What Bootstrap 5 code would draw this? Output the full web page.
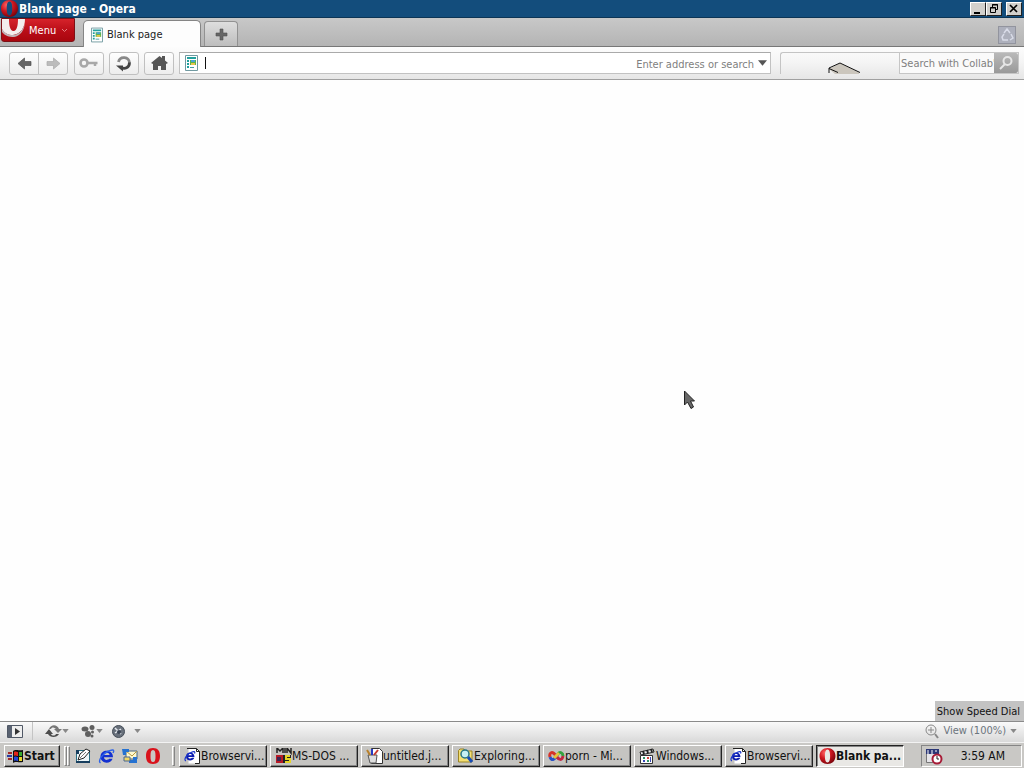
<!DOCTYPE html>
<html lang="en">
<head>
<meta charset="utf-8">
<meta name="viewport" content="width=device-width, initial-scale=1">
<title>Blank page - Opera</title>
<link href="https://cdn.jsdelivr.net/npm/bootstrap@5.3.0/dist/css/bootstrap.min.css" rel="stylesheet">
<style>
body{font:11px/14px "DejaVu Sans Condensed","DejaVu Sans",sans-serif;color:#222;background:#fefefe}
button,input{font:inherit;color:inherit;border-radius:0}
svg{display:block;flex:none}
.titlebar{height:18px;background:#134d7c;color:#fff;border-bottom:1px solid #0c3555;padding:0 2px 0 1px}
.titlebar h1{font-size:12px;line-height:17px;font-weight:700;padding:2px 0 0 1px}
.win-btn{width:16px;height:14px;padding:0;background:#d2d0cc;border:1px solid;border-color:#fff #222 #222 #fff}
.tabstrip{height:29px;background:linear-gradient(#c8c8c8,#b4b4b4);border-bottom:1px solid #777}
.menu-btn{width:74px;height:24px;margin-left:1px;padding:0 6px 0 0;color:#fff;background:linear-gradient(#d6232b,#b90d17 55%,#a9060e);border:1px solid #7d1117;border-radius:0 0 3px 3px;overflow:hidden}
.menu-btn span{padding-top:2px}
.page-tab{width:118px;height:27px;margin:0 3px -1px 8px;padding:1px 7px 0;background:#fdfdfd;border:1px solid #858585;border-bottom:0;border-radius:5px 5px 0 0;color:#222}
.new-tab{width:34px;height:25px;padding:0;background:linear-gradient(#dedede,#bdbdbd);border:1px solid #929292;border-bottom:0;border-radius:4px 4px 0 0}
.trash{width:18px;height:18px;padding:0;background:#adb0bc;border:1px solid #92949e;margin:0 8px 2px 0}
.toolbar{height:33px;background:linear-gradient(#fcfcfc,#f4f4f4 50%,#e6e6e6);border-bottom:1px solid #a0a0a0;padding:0 5px 0 9px}
.tools{gap:5px}
.tool{width:30px;height:23px;padding:0;background:linear-gradient(#fefefe,#ededed);border:1px solid #c0c0c0;border-radius:3px}
.tool-l{border-radius:3px 0 0 3px}
.tool-r{border-radius:0 3px 3px 0;margin-left:-1px}
.history{padding-right:1px}
.address{height:22px;background:#fff;border:1px solid #c2c2c2;border-top-color:#aaa;padding:0 3px 0 5px;margin-right:9px}
.plain{border:0;outline:0;background:transparent;padding:0;min-width:0}
.plain::placeholder{color:#808080;opacity:1}
.address input,.finder input{padding-top:2px}
.caret{width:1px;height:12px;background:#111;margin-left:3px}
.throbber{width:119px;height:22px;border:1px solid #c4c4c4;border-right:0;border-bottom:0;border-radius:3px 0 0 0;padding-left:46px}
.finder{width:120px;height:22px;border:1px solid #c6c6c6;background:#fafafa;padding-left:1px}
.find-btn{width:24px;height:20px;padding:0;border:0;background:linear-gradient(#b9b9b9,#999);border-radius:0 2px 2px 0}
.pointer{left:66.8%;top:48.4%}
.tip{right:0;bottom:0;height:20px;padding:1px 4px 0 2px;line-height:20px;background:#c3c3c3;color:#111}
.status{height:21px;border-top:1px solid #8b8b8b;background:linear-gradient(#fafafa,#d9d9d9);padding:0 7px 2px}
.status button{height:18px}
.divider{width:1px;height:18px;background:#c4c4c4;margin:0 12px 0 9px}
.taskbar{height:26px;background:#c9c8c5;border-top:1px solid #f2f2f2;padding:0 2px 0 4px;color:#111}
.task{height:22px;padding:0 2px;background:#c5c4c1;border:1px solid;border-color:#fff #222 #222 #fff;box-shadow:inset -1px -1px #858585;text-align:left}
.tasks{gap:3px;margin-left:4px}
.tasks .task{flex:1 1 0;min-width:0;max-width:88px;padding-left:4px;font-size:12px}
.task.start{width:56px;font-size:12px;font-weight:700}
.tasks .task.active{background:#e9e8e5;border-color:#222 #fff #fff #222;box-shadow:inset 1px 1px #858585;font-weight:700;padding-left:2px}
.grip{width:3px;height:20px;border:1px solid;border-color:#fff #858585 #858585 #fff}
.quick{gap:7px;padding:0 11px 0 5px}
.tray{width:101px;height:22px;border:1px solid;border-color:#858585 #fff #fff #858585;padding:0 16px 0 3px;font-size:12px}
</style>
</head>
<body class="d-flex flex-column min-vh-100">
<svg width="0" height="0" class="position-absolute" aria-hidden="true">
<defs>
<radialGradient id="red" cx=".35" cy=".3" r=".8"><stop offset="0" stop-color="#f66"/><stop offset=".45" stop-color="#cf1720"/><stop offset="1" stop-color="#6e0008"/></radialGradient>
<symbol id="opera" viewBox="0 0 16 16"><path fill="url(#red)" fill-rule="evenodd" d="M8 0C3.500 0 0 3 0 8s3.500 8 8 8 8-3 8-8-3.500-8-8-8zm0 1.500c2 0 2.600 3 2.600 6.500S10 14.500 8 14.500 5.400 11.500 5.400 8 6 1.500 8 1.500z"/></symbol>
<symbol id="page" viewBox="0 0 13 16"><path fill="#fff" stroke="#7099a0" d="M.5.5h12v15H.5z"/><path fill="#21a09d" d="M2 2h9v2H2zM2 5h2v2H2zm0 3h2v2H2zm0 3h2v2H2z"/><path fill="#5bb54a" d="M5 5h6v5H5z"/><path fill="#e9c54c" d="M6 8h4v2H6z"/><path fill="#49a3d8" d="M6 5h4v2H6z"/><path stroke="#479aa0" d="M5 12.500h4"/></symbol>
<symbol id="ie" viewBox="0 0 16 16"><path d="M14.500 9.200H5.500c.2 3.300 4 3.300 5 1.500h3.600C12 16.500 2 16 2 8.500 2 1 14.500.5 14.500 9.200zM5.500 7h5.600c-.4-3-5-3-5.600 0z" fill="#1330d0"/><path d="M2 15c-3-2 2-9 7-11.500C14 1 16.500 1.500 14.500 5" fill="none" stroke="#2d63e8" stroke-width="1.400"/></symbol>
<symbol id="iedoc" viewBox="0 0 17 16"><path d="M4.500.5h8l3 3v12h-11z" fill="#fff"/><path d="M3 .5h9.500l3 3v12H11M12.500.5v3h3" fill="none" stroke="#222"/><path d="M10.500 9H4.200c.2 2 3 2 3.800.8h2.300C9 13.500 2 13.500 2 8.500c0-5.500 8.500-5 8.500.5zM4.300 7.300H8c-.5-1.600-3.300-1.600-3.700 0z" fill="#0b1bb0"/><path d="M2 13C-1 12 3 6 7 4.500c3-1.500 4.500-1 3.500 1" fill="none" stroke="#1a36cc" stroke-width="1.200"/></symbol>
<symbol id="drop" viewBox="0 0 8 5"><path d="M0 0h8L4 5z" fill="currentColor"/></symbol>
</defs></svg>

<header>
<div class="titlebar d-flex align-items-center">
<svg width="17" height="17"><use href="#opera"/></svg>
<h1 class="m-0 flex-grow-1">Blank page - Opera</h1>
<button class="win-btn" aria-label="Minimize"><svg width="14" height="12"><path d="M3 9h6v2H3z"/></svg></button>
<button class="win-btn me-1" aria-label="Restore"><svg width="14" height="12" fill="none" stroke="#000"><path d="M5.500 4V1.500h5v5H9M5 2h6M3.500 4.500h5v5h-5zM3 5h6"/></svg></button>
<button class="win-btn" aria-label="Close"><svg width="14" height="12"><path d="m3 2 7 7m0-7L3 9" stroke="#000" stroke-width="1.700"/></svg></button>
</div>
<div class="tabstrip d-flex align-items-end">
<button class="menu-btn d-flex align-items-center align-self-start"><svg width="27" height="22" viewBox="0 0 27 22"><path fill="#f3eeee" fill-rule="evenodd" d="M0 0h23c0 8-4 15-12 16C6 16 2 14 0 10zM7 0c0 6 1 12 4.500 12S16 6 16 0z"/><path fill="#c0b4b8" d="M0 10c3 4 6 6 11 6 6 0 10-5 12-12-1 8-5 13-11 14-5 0-9-1-12-5z"/></svg><span class="flex-grow-1 text-start">Menu</span><svg width="7" height="5"><path d="m1 1 2.500 2.500L6 1" fill="none" stroke="#e58084"/></svg></button>
<button class="page-tab d-flex align-items-center gap-1"><svg width="12" height="16"><use href="#page"/></svg>Blank page</button>
<button class="new-tab d-flex align-items-center justify-content-center" aria-label="New tab"><svg width="13" height="13"><path d="M5 1h3v4h4v3H8v4H5V8H1V5h4z" fill="#666" stroke="#505050" stroke-width=".6"/></svg></button>
<button class="trash ms-auto" aria-label="Closed tabs"><svg width="16" height="16" fill="none" stroke="#d9dce8" stroke-width="1.500"><path d="m5 6 3-4 3 4M12 7l2 4-3 2M9 13H4l-1-3 2-3"/></svg></button>
</div>
<div class="toolbar d-flex align-items-center">
<div class="tools d-flex align-items-center flex-grow-1">
<div class="history d-flex">
<button class="tool tool-l d-flex align-items-center justify-content-center" aria-label="Back"><svg width="15" height="13"><path d="M1 6.500 7.500 1v3.500H14v4H7.500V12z" fill="#666" stroke="#505050" stroke-width=".7"/></svg></button>
<button class="tool tool-r d-flex align-items-center justify-content-center" aria-label="Forward"><svg width="15" height="13"><path d="M14 6.500 7.500 1v3.500H1v4h6.500V12z" fill="#bcbcbc" stroke="#aaa" stroke-width=".7"/></svg></button>
</div>
<button class="tool d-flex align-items-center justify-content-center" aria-label="Wand"><svg width="20" height="12" fill="none" stroke="#a8a8a8"><circle cx="5" cy="6" r="3.500" stroke-width="2.600"/><path d="M9 6h9.500M16 6v3" stroke-width="2.500"/></svg></button>
<button class="tool d-flex align-items-center justify-content-center" aria-label="Reload"><svg width="18" height="17" fill="none" stroke-width="2.800"><path d="M3.500 7C5 .500 14.500 1.500 14.500 8" stroke="#888"/><path d="M14.500 7.500c0 5.500-5 7-8.500 5" stroke="#444"/><path d="M1 10.500h7v6z" fill="#444"/></svg></button>
<button class="tool d-flex align-items-center justify-content-center" aria-label="Home"><svg width="17" height="16"><path d="m0 8 8.500-7L11 3V1h3v4.500L17 8l-2 1v6h-5v-4H7v4H2V9z" fill="#555"/></svg></button>
<div class="address d-flex align-items-center flex-grow-1 gap-1">
<svg width="13" height="16"><use href="#page"/></svg>
<span class="caret"></span>
<input class="plain h-100 flex-grow-1 text-end" aria-label="Address" placeholder="Enter address or search">
<button class="plain d-flex" aria-label="Address history"><svg width="9" height="6" color="#555"><use href="#drop"/></svg></button>
</div></div>
<div class="throbber"><svg width="36" height="21"><path d="m2 16 11-6 19 9.500V21H8z" fill="#cbc6bd"/><path d="M2 20v-5l11-5 20 9.500M2 15.500l9 4" fill="none" stroke="#111"/></svg></div>
<div class="finder d-flex"><input class="plain flex-grow-1 w-100" aria-label="Search" placeholder="Search with Collab'"><button class="find-btn d-flex align-items-center justify-content-center flex-shrink-0" aria-label="Search"><svg width="16" height="16" fill="none" stroke="#e6e6e6" stroke-width="2"><circle cx="9.500" cy="6" r="4"/><path d="m7 9-5 5"/></svg></button></div>
</div>
</header>

<main class="flex-grow-1 position-relative">
<svg class="pointer position-absolute" width="12" height="20" viewBox="0 0 12 20" aria-hidden="true"><path d="M.5 1v14l3-3 3.500 6.500 2.500-1.500-3-6h4z" fill="#686868" stroke="#222"/></svg>
<div class="tip position-absolute" role="tooltip">Show Speed Dial</div>
</main>

<footer>
<div class="status d-flex align-items-center">
<button class="plain" aria-label="Panels"><svg width="16" height="18"><path d="M.5 3.500h15v12H.5z" fill="#eee" stroke="#505866"/><path d="M1 4h4v11H1z" fill="#596271"/><path d="m8 6 5 3.500L8 13z" fill="#333"/></svg></button>
<span class="divider"></span>
<div class="d-flex gap-2">
<button class="plain d-flex align-items-center" aria-label="Synchronize"><svg width="17" height="14"><path d="M4 5c2-5 8-5 10 0h3l-4 4-4-4h2C9 3 7 3 6 5z" fill="#777"/><path d="M14 10c-2 4-9 4-11 0H0l4-5 4 5H6c1 2 4 2 5 0z" fill="#4d4d4d"/></svg><svg width="7" height="4" color="#888"><use href="#drop"/></svg></button>
<button class="plain d-flex align-items-center ms-1" aria-label="Unite"><svg width="15" height="15" fill="#606060"><ellipse cx="4" cy="5" rx="3.500" ry="2.500"/><circle cx="11" cy="3.500" r="2.500"/><circle cx="7" cy="10" r="3"/><circle cx="11.500" cy="8" r="1.500"/><circle cx="11" cy="12" r="1.500"/></svg><svg width="7" height="4" color="#888"><use href="#drop"/></svg></button>
<button class="plain d-flex align-items-center gap-2" aria-label="Turbo"><svg width="15" height="15"><circle cx="7.500" cy="7.500" r="6" fill="#68707b" stroke="#444c57"/><path d="m4 4 6 6m-6-1 6-4" stroke="#e3e7ed" stroke-width="1.500"/><circle cx="8" cy="8" r="2" fill="#394352"/></svg><svg width="7" height="4" color="#888"><use href="#drop"/></svg></button>
</div>
<button class="plain d-flex align-items-center gap-1 ms-auto text-secondary"><svg width="14" height="15" fill="none" stroke="#888"><circle cx="6" cy="6" r="5"/><path d="M3 6h6M6 3v6"/><path d="m10 10 3 4" stroke-width="2"/></svg>View (100%)<svg width="7" height="4" color="#888"><use href="#drop"/></svg></button>
</div>
<nav class="taskbar d-flex align-items-center" aria-label="Taskbar">
<button class="task start d-flex align-items-center"><svg width="17" height="16"><path d="M6 3c3-2 4 0 10-1v12c-6 1-7-1-10 1z" fill="#111"/><path d="M7 4c2-1 2 0 4 0v4C9 8 9 7 7 8z" fill="#e5241b"/><path d="M12 4h3v4h-3z" fill="#35a82f"/><path d="M7 9c2-1 2 0 4 0v4c-2 0-2-1-4 0z" fill="#2344d8"/><path d="M12 9h3v4h-3z" fill="#e9d62c"/><path d="M1 4h4v2H1zm0 6h4v2H1z" fill="#a52825"/><path d="M0 7h5v2H0z" fill="#2a3ca5"/></svg>Start</button>
<span class="grip ms-1"></span><span class="grip"></span>
<div class="quick d-flex">
<button class="plain" aria-label="Show desktop"><svg width="16" height="16"><path d="M1.500 2.500h13v12h-13z" fill="#edf6f9" stroke="#276e83"/><path d="M1 13h14v2H1zM1 2h3v4H1z" fill="#173e5e"/><path d="m3 12 2-6 6-5 4 2-6 7z" fill="#fff" stroke="#222"/><path d="m5 10 6-6" stroke="#777"/></svg></button>
<button class="plain" aria-label="Internet Explorer"><svg width="17" height="16"><use href="#ie"/></svg></button>
<button class="plain" aria-label="Outlook Express"><svg width="16" height="16"><path d="M4 3h11v8H4z" fill="#fff8cf" stroke="#46637f"/><path d="m4 3 6 5 5-5" fill="none" stroke="#b6993d"/><path d="M0 1h7v3H4v3H1zm15 8v6H7v-3h4V9z" fill="#2672d1"/><path d="M2 9h6v4H2z" fill="#f2d864" stroke="#486791"/></svg></button>
<button class="plain" aria-label="Opera"><svg width="16" height="16"><path d="M8 0C3 0 1 3 1 8s2 8 7 8 7-3 7-8-2-8-7-8zm0 2c2 0 2.500 2 2.500 6S10 14 8 14s-2.500-2-2.500-6S6 2 8 2z" fill="#d9131c" fill-rule="evenodd"/></svg></button>
</div>
<span class="grip"></span>
<div class="tasks d-flex flex-grow-1">
<button class="task d-flex align-items-center"><svg width="17" height="16"><use href="#iedoc"/></svg><span class="text-nowrap">Browservi...</span></button>
<button class="task d-flex align-items-center"><svg width="17" height="16"><path d="M1 7h7v8H1z" fill="#b81925"/><path d="M8 7h8v8H8z" fill="#222"/><path d="M2 5V0l3 3 3-3v5M10 0v5M12 5V0l4 5V0" fill="none" stroke="#222" stroke-width="1.500"/><path d="M2 9h4v4H2z" fill="#3d2452"/><path d="M15 8h-4v3h4v3h-5" fill="none" stroke="#e6d426" stroke-width="2"/></svg><span class="text-nowrap">MS-DOS ...</span></button>
<button class="task d-flex align-items-center"><svg width="17" height="16"><path d="M5.500.5h8l3 3v12h-11z" fill="#fff" stroke="#333"/><path d="M2 7h9l-1 8H4z" fill="#dedede" stroke="#555"/><path d="m4 7-3-5" stroke="#b9802a" stroke-width="2"/><path d="M6 7V1" stroke="#263ac3" stroke-width="2"/><path d="m8 7 4-5" stroke="#c7392c" stroke-width="2"/></svg><span class="text-nowrap">untitled.j...</span></button>
<button class="task d-flex align-items-center"><svg width="17" height="16"><path d="M1.500 2.500 3 1h4l1 2h7v11H1.500z" fill="#f4df72" stroke="#9b8424"/><circle cx="8" cy="6" r="4" fill="#c6f0f3" stroke="#287585" stroke-width="1.500"/><path d="m11 9 4 5" stroke="#164bb7" stroke-width="3"/></svg><span class="text-nowrap">Exploring...</span></button>
<button class="task d-flex align-items-center"><svg width="17" height="16" fill="none" stroke-width="3"><path d="M8 8C4 2 1 5 2 9" stroke="#d73228"/><path d="M2 9c2 5 5 2 8-3" stroke="#2851c6"/><path d="M10 6c2-3 5-1 5 2" stroke="#33a340"/><path d="M15 8c-1 5-4 4-7 0" stroke="#c22742"/><path d="m6 10 5-5" stroke="#e5c33a"/></svg><span class="text-nowrap">porn - Mi...</span></button>
<button class="task d-flex align-items-center"><svg width="17" height="16"><path d="M1.500 7.500h12v8h-12z" fill="#fff" stroke="#333"/><path d="m1 4 13-3 1 3-13 3z" fill="#eee" stroke="#222"/><path d="m4 3 1 3m3-4 1 3m3-4 1 3" stroke="#222" stroke-width="2"/><path d="M4 9h2v2H4zm4 3h2v2H8z" fill="#31956a"/><path d="M8 9h2v2H8z" fill="#d3433d"/><path d="M4 12h2v2H4zm7-3h1v5h-1z" fill="#3948b7"/></svg><span class="text-nowrap">Windows...</span></button>
<button class="task d-flex align-items-center"><svg width="17" height="16"><use href="#iedoc"/></svg><span class="text-nowrap">Browservi...</span></button>
<button class="task active d-flex align-items-center"><svg width="17" height="16"><use href="#opera"/></svg><span class="text-nowrap">Blank pa...</span></button>
</div>
<div class="tray d-flex align-items-center justify-content-between ms-auto"><svg width="18" height="18"><path d="M1.500 2.500h12v13h-12z" fill="#e6e5e9" stroke="#777"/><path d="M1 2h13v5H1z" fill="#2b3676"/><path d="M2 4h2m2 0h2m2 0h2M2 6h2m2 0h2" stroke="#fff"/><circle cx="12" cy="12" r="4.500" fill="#fff" stroke="#a71c37" stroke-width="2"/><path d="M12 9v3h2" fill="none" stroke="#222"/></svg><time>3:59 AM</time></div>
</nav>
</footer>
<script src="https://cdn.jsdelivr.net/npm/bootstrap@5.3.0/dist/js/bootstrap.bundle.min.js"></script>
</body>
</html>
